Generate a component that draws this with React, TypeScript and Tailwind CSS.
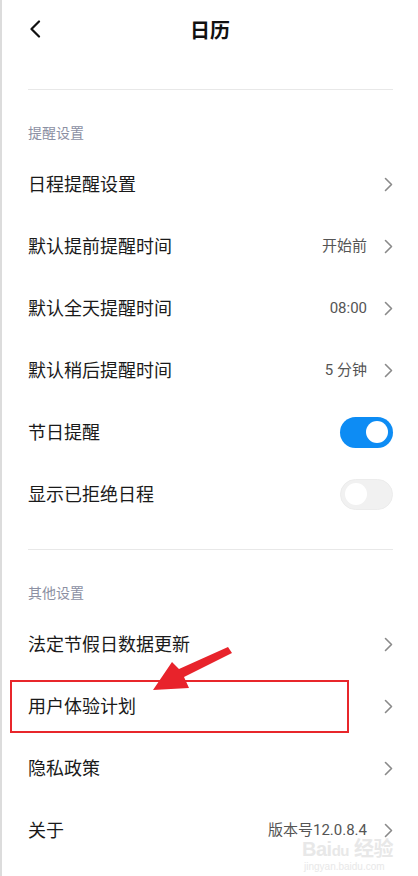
import React from 'react';

const font = { fontFamily: '"Noto Sans CJK SC", "Noto Sans", sans-serif' };
const valueFont = { fontFamily: 'Roboto, "Noto Sans CJK SC", sans-serif' };

function Chevron() {
  return (
    <svg width="9" height="15" viewBox="0 0 9 15" fill="none" className="shrink-0">
      <path d="M1.5 1.5L7.5 7.5L1.5 13.5" stroke="#8a8a8a" strokeWidth="1.6" strokeLinecap="round" strokeLinejoin="round" />
    </svg>
  );
}

function Toggle({ on }: { on: boolean }) {
  return on ? (
    <div className="w-[53px] h-[31px] rounded-full bg-[#0d8cf4] flex items-center justify-end pr-[5px]">
      <div className="w-[22px] h-[22px] rounded-full bg-white" />
    </div>
  ) : (
    <div className="w-[53px] h-[31px] rounded-full bg-[#f1f1f1] border border-[#ececec] flex items-center pl-[4px]">
      <div className="w-[22px] h-[22px] rounded-full bg-white" />
    </div>
  );
}

function Row({ label, value, toggle }: { label: string; value?: string; toggle?: boolean }) {
  return (
    <div className="h-[62px] flex items-center justify-between">
      <span className="text-[18px] leading-[24px] -mt-[2px] text-[#1a1a1a]">{label}</span>
      {toggle === undefined ? (
        <div className="flex items-center gap-[17px]">
          {value && <span style={valueFont} className="text-[15px] text-[#555]">{value}</span>}
          <Chevron />
        </div>
      ) : (
        <Toggle on={toggle} />
      )}
    </div>
  );
}

function SectionTitle({ children }: { children: React.ReactNode }) {
  return <div className="pt-[32px] pb-[11px] text-[14px] leading-[20px] text-[#8c90a3]">{children}</div>;
}

export default function App() {
  return (
    <div style={font} className="relative w-[418px] h-[876px] bg-white border-l-2 border-[#dcdcdc] overflow-hidden">
      <div className="h-[60px] relative flex items-center justify-center">
        <svg width="12" height="18" viewBox="0 0 12 18" fill="none" className="absolute left-[27px] top-[20px]">
          <path d="M10 1.5L2.5 9L10 16.5" stroke="#111" strokeWidth="2.2" strokeLinecap="round" strokeLinejoin="round" />
        </svg>
        <span className="text-[20px] font-semibold text-[#111]">日历</span>
      </div>

      <div className="pl-[26px] pr-[25px]">
        <div className="mt-[29px] h-px bg-[#e8e8e8]" />
        <SectionTitle>提醒设置</SectionTitle>
        <Row label="日程提醒设置" />
        <Row label="默认提前提醒时间" value="开始前" />
        <Row label="默认全天提醒时间" value="08:00" />
        <Row label="默认稍后提醒时间" value="5 分钟" />
        <Row label="节日提醒" toggle={true} />
        <Row label="显示已拒绝日程" toggle={false} />

        <div className="mt-[24px] h-px bg-[#e8e8e8]" />
        <SectionTitle>其他设置</SectionTitle>
        <Row label="法定节假日数据更新" />
        <Row label="用户体验计划" />
        <Row label="隐私政策" />
        <Row label="关于" value="版本号12.0.8.4" />
      </div>

      {/* annotation overlay */}
      <div className="absolute left-[8px] top-[680px] w-[339px] h-[53px] border-2 border-[#e8262b]" />
      <svg className="absolute left-0 top-0" width="418" height="876" viewBox="0 0 418 876">
        <polygon points="151,690 170,662 177,669 226,647 230,653 182,677 187,688" fill="#e8232b" />
      </svg>
      <div className="absolute left-[300px] top-[839px] leading-none text-[#e8e8e8] select-none">
        <div className="text-[20px] font-bold tracking-tight" style={{ fontFamily: '"Liberation Sans", "Noto Sans CJK SC", sans-serif' }}>
          Bai<span className="text-[15px]">du</span> 经验
        </div>
        <div className="text-[10px] mt-[3px] ml-[2px]" style={{ fontFamily: '"Liberation Sans", sans-serif' }}>jingyan.baidu.com</div>
      </div>
    </div>
  );
}
